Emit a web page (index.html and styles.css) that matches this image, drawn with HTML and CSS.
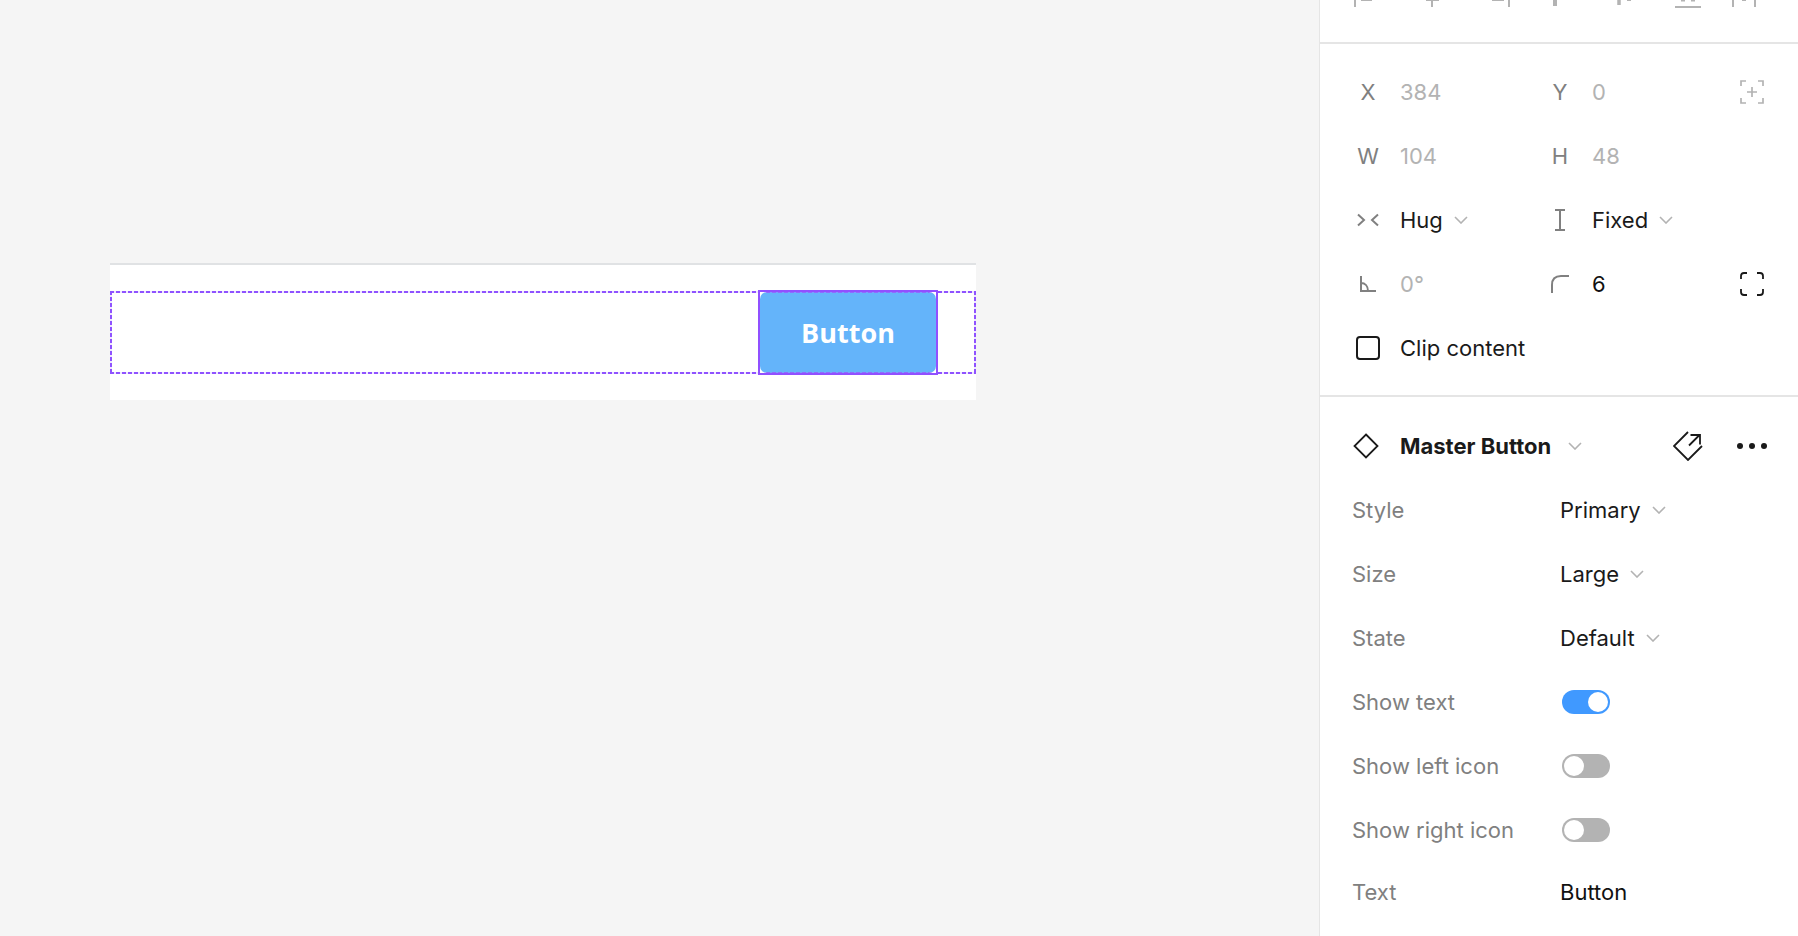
FILE: index.html
```html
<!DOCTYPE html>
<html lang="en">
<head>
    <meta charset="UTF-8">
    <meta name="viewport" content="width=device-width, initial-scale=1.0">
    <title>Master Button</title>
    <link rel="stylesheet" href="styles.css">
</head>
<body>
    <div class="app">
        <main class="canvas">
            <div class="frame">
                <div class="auto-layout">
                    <div class="selected">
                        <div class="demo-button">Button</div>
                    </div>
                </div>
            </div>
        </main>
        <aside class="panel">
            <div class="align-bar">
                <svg class="align-icons" width="478" height="12" viewBox="0 0 478 12" fill="none" stroke="#b3b3b3" stroke-width="2">
                    <path d="M35 0v7M41 0h11"/>
                    <path d="M112 0v7M106 0h13"/>
                    <path d="M172 0h12M189 0v7"/>
                    <path d="M235 0v6" stroke-width="4"/>
                    <path d="M299 0v5" stroke-width="3.5"/>
                    <path d="M307 0h4"/>
                    <path d="M355 7h26"/>
                    <path d="M363 0v1.5M373 0v1.5" stroke-width="4"/>
                    <path d="M413 0v7M435 0v7M422 0h4"/>
                </svg>
            </div>
            <section class="geometry">
                <div class="geo-row">
                    <div class="field"><span class="axis">X</span><span class="value muted">384</span></div>
                    <div class="field"><span class="axis">Y</span><span class="value muted">0</span></div>
                    <svg class="side-icon" width="24" height="24" viewBox="0 0 24 24" fill="none" stroke="#b3b3b3" stroke-width="1.7">
                        <path d="M1 6V1h5M18 1h5v5M23 18v5h-5M6 23H1v-5M12 7v10M7 12h10"/>
                    </svg>
                </div>
                <div class="geo-row">
                    <div class="field"><span class="axis">W</span><span class="value muted">104</span></div>
                    <div class="field"><span class="axis">H</span><span class="value muted">48</span></div>
                </div>
                <div class="geo-row">
                    <div class="field">
                        <span class="axis">
                            <svg width="24" height="16" viewBox="0 0 24 16" fill="none" stroke="#808080" stroke-width="2">
                                <path d="M2 2.500L8 8l-6 5.500M22 2.500L16 8l6 5.500"/>
                            </svg>
                        </span>
                        <span class="value">Hug</span>
                        <svg class="chevron" width="14" height="8" viewBox="0 0 14 8"><path d="M1 1l6 6 6-6"/></svg>
                    </div>
                    <div class="field">
                        <span class="axis">
                            <svg width="12" height="22" viewBox="0 0 12 22" fill="none" stroke="#808080" stroke-width="2">
                                <path d="M1 1h10M1 21h10M6 1v20"/>
                            </svg>
                        </span>
                        <span class="value">Fixed</span>
                        <svg class="chevron" width="14" height="8" viewBox="0 0 14 8"><path d="M1 1l6 6 6-6"/></svg>
                    </div>
                </div>
                <div class="geo-row">
                    <div class="field">
                        <span class="axis">
                            <svg width="18" height="16" viewBox="0 0 18 16" fill="none" stroke="#808080" stroke-width="2">
                                <path d="M2 0v15h15M2 7c4 0 7 3 7 8"/>
                            </svg>
                        </span>
                        <span class="value muted">0°</span>
                    </div>
                    <div class="field">
                        <span class="axis">
                            <svg width="20" height="20" viewBox="0 0 20 20" fill="none" stroke="#808080" stroke-width="2">
                                <path d="M2 19V11c0-6 3-9 9-9h8"/>
                            </svg>
                        </span>
                        <span class="value dark">6</span>
                    </div>
                    <svg class="side-icon" width="24" height="24" viewBox="0 0 24 24" fill="none" stroke="#1a1a1a" stroke-width="1.8">
                        <path d="M1 7V4c0-2 1-3 3-3h3M17 1h3c2 0 3 1 3 3v3M23 17v3c0 2-1 3-3 3h-3M7 23H4c-2 0-3-1-3-3v-3"/>
                    </svg>
                </div>
                <div class="geo-row">
                    <div class="field wide">
                        <span class="axis"><span class="checkbox"></span></span>
                        <span class="value">Clip content</span>
                    </div>
                </div>
            </section>
            <section class="props">
                <div class="master-row">
                    <svg class="diamond" width="28" height="28" viewBox="0 0 28 28" fill="none" stroke="#1a1a1a" stroke-width="1.8">
                        <path d="M14 2.500L25.500 14 14 25.500 2.500 14z"/>
                    </svg>
                    <span class="master-name">Master Button</span>
                    <svg class="chevron" width="14" height="8" viewBox="0 0 14 8"><path d="M1 1l6 6 6-6"/></svg>
                    <svg class="go-main" width="30" height="30" viewBox="0 0 30 30" fill="none" stroke="#1a1a1a" stroke-width="1.8">
                        <path d="M15 1L1 15l14 14 14-14"/>
                        <path d="M16 14.500L26.500 4M17.500 4H27v9.500"/>
                    </svg>
                    <div class="dots"><i></i><i></i><i></i></div>
                </div>
                <div class="prop-row">
                    <span class="prop-label">Style</span>
                    <span class="value">Primary</span>
                    <svg class="chevron" width="14" height="8" viewBox="0 0 14 8"><path d="M1 1l6 6 6-6"/></svg>
                </div>
                <div class="prop-row">
                    <span class="prop-label">Size</span>
                    <span class="value">Large</span>
                    <svg class="chevron" width="14" height="8" viewBox="0 0 14 8"><path d="M1 1l6 6 6-6"/></svg>
                </div>
                <div class="prop-row">
                    <span class="prop-label">State</span>
                    <span class="value">Default</span>
                    <svg class="chevron" width="14" height="8" viewBox="0 0 14 8"><path d="M1 1l6 6 6-6"/></svg>
                </div>
                <div class="prop-row">
                    <span class="prop-label">Show text</span>
                    <span class="toggle on"><i></i></span>
                </div>
                <div class="prop-row">
                    <span class="prop-label">Show left icon</span>
                    <span class="toggle"><i></i></span>
                </div>
                <div class="prop-row">
                    <span class="prop-label">Show right icon</span>
                    <span class="toggle"><i></i></span>
                </div>
                <div class="prop-row text-row">
                    <span class="prop-label">Text</span>
                    <span class="value dark">Button</span>
                </div>
            </section>
        </aside>
    </div>
</body>
</html>
```

FILE: styles.css
```css
html, body {
    margin: 0;
    padding: 0;
    height: 100%;
    overflow: hidden;
}
body {
    font-family: Inter, "Liberation Sans", sans-serif;
    font-size: 22px;
    color: #1a1a1a;
    background-color: #f5f5f5;
}
.app {
    display: flex;
    height: 936px;
}
.canvas {
    flex: 1;
    padding: 263px 0 0 110px;
    box-sizing: border-box;
}
.frame {
    width: 866px;
    height: 137px;
    box-sizing: border-box;
    padding-top: 26px;
    background-color: #fff;
    border-top: 2px solid #e0e2e4;
}
.auto-layout {
    height: 83px;
    box-sizing: border-box;
    padding-right: 38px;
    display: flex;
    justify-content: flex-end;
    align-items: center;
    background:
        repeating-linear-gradient(to right, #8f52ff 0 4px, #efe8ff 4px 6px) top / 100% 2px no-repeat,
        repeating-linear-gradient(to right, #8f52ff 0 4px, #efe8ff 4px 6px) bottom / 100% 2px no-repeat,
        repeating-linear-gradient(to bottom, #8f52ff 0 4px, #efe8ff 4px 6px) left / 2px 100% no-repeat,
        repeating-linear-gradient(to bottom, #8f52ff 0 4px, #efe8ff 4px 6px) right / 2px 100% no-repeat;
}
.selected {
    flex-shrink: 0;
    width: 180px;
    height: 85px;
    box-sizing: border-box;
    border: 2px solid #9150ff;
    background-color: #fff;
}
.demo-button {
    height: 100%;
    display: flex;
    align-items: center;
    justify-content: center;
    border-radius: 7px;
    background:
        repeating-linear-gradient(to right, #8f6cfd 0 4px, #7aa0fb 4px 6px) top / 100% 1px no-repeat,
        repeating-linear-gradient(to right, #8f6cfd 0 4px, #7aa0fb 4px 6px) bottom / 100% 1px no-repeat,
        #64b4fa;
    color: #fff;
    font-family: "Open Sans", sans-serif;
    font-weight: 700;
    font-size: 27px;
}
.panel {
    width: 479px;
    flex-shrink: 0;
    box-sizing: border-box;
    background-color: #fff;
    border-left: 1px solid #e5e5e5;
}
.align-bar {
    height: 42px;
    border-bottom: 2px solid #e5e5e5;
}
.align-icons {
    display: block;
}
.geometry {
    box-sizing: border-box;
    height: 353px;
    padding: 16px 0 0 32px;
    border-bottom: 2px solid #e5e5e5;
}
.geo-row {
    position: relative;
    height: 64px;
    display: flex;
    align-items: center;
}
.field {
    width: 192px;
    display: flex;
    align-items: center;
}
.field.wide {
    width: auto;
}
.axis {
    width: 32px;
    margin-right: 16px;
    flex-shrink: 0;
    display: flex;
    justify-content: center;
    color: #808080;
}
.value {
    white-space: nowrap;
}
.muted {
    color: #b3b3b3;
}
.dark {
    color: #111;
}
.side-icon {
    position: absolute;
    left: 388px;
}
.chevron {
    flex-shrink: 0;
    margin-left: 11px;
    fill: none;
    stroke: #b3b3b3;
    stroke-width: 1.6;
}
.checkbox {
    width: 24px;
    height: 24px;
    box-sizing: border-box;
    border: 2px solid #1a1a1a;
    border-radius: 4px;
}
.props {
    box-sizing: border-box;
    padding: 17px 0 0 32px;
}
.master-row {
    height: 64px;
    display: flex;
    align-items: center;
}
.diamond {
    margin-right: 20px;
}
.master-name {
    font-weight: 700;
    white-space: nowrap;
}
.master-row .chevron {
    margin-left: 17px;
}
.go-main {
    margin-left: 91px;
}
.dots {
    margin-left: 34px;
    display: flex;
    gap: 6px;
}
.dots i {
    width: 6px;
    height: 6px;
    border-radius: 50%;
    background-color: #1a1a1a;
}
.prop-row {
    height: 64px;
    display: flex;
    align-items: center;
}
.prop-label {
    width: 208px;
    flex-shrink: 0;
    color: #808080;
}
.text-row {
    margin-top: -2px;
}
.toggle {
    margin-left: 2px;
    width: 48px;
    height: 24px;
    box-sizing: border-box;
    border-radius: 12px;
    padding: 2px;
    display: flex;
    background-color: #b3b3b3;
}
.toggle.on {
    justify-content: flex-end;
    background-color: #4099ff;
}
.toggle i {
    width: 20px;
    height: 20px;
    border-radius: 50%;
    background-color: #fff;
}
```
